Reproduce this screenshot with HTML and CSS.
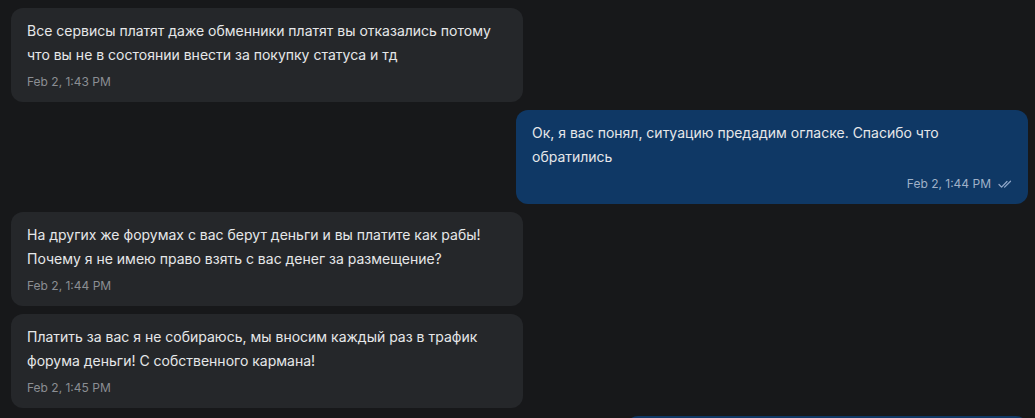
FILE: index.html
```html
<!DOCTYPE html>
<html lang="ru">
<head>
<meta charset="utf-8">
<link rel="stylesheet" href="styles.css">
</head>
<body>
<div class="chat">
  <div class="msg in">
    <div class="text">Все сервисы платят даже обменники платят вы отказались потому что вы не в состоянии внести за покупку статуса и тд</div>
    <div class="meta"><span class="time">Feb 2, 1:43 PM</span></div>
  </div>
  <div class="msg out">
    <div class="text">Ок, я вас понял, ситуацию предадим огласке. Спасибо что обратились</div>
    <div class="meta"><span class="time">Feb 2, 1:44 PM</span>
      <svg class="check" width="14" height="10" viewBox="0 0 14 10" fill="none" stroke="currentColor" stroke-width="1.3" stroke-linecap="round" stroke-linejoin="round"><path d="M1 5.5l2.6 2.6L9 2.5"/><path d="M6.6 8.1L12.5 2.2"/></svg>
    </div>
  </div>
  <div class="msg in">
    <div class="text">На других же форумах с вас берут деньги и вы платите как рабы! Почему я не имею право взять с вас денег за размещение?</div>
    <div class="meta"><span class="time">Feb 2, 1:44 PM</span></div>
  </div>
  <div class="msg in">
    <div class="text">Платить за вас я не собираюсь, мы вносим каждый раз в трафик форума деньги! С собственного кармана!</div>
    <div class="meta"><span class="time">Feb 2, 1:45 PM</span></div>
  </div>
  <div class="msg out short"></div>
</div>
</body>
</html>
```
FILE: styles.css
```css
html, body {
  margin: 0;
  padding: 0;
  background: #17181a;
  height: 100%;
  overflow: hidden;
}
body {
  font-family: Inter, "Noto Sans", sans-serif;
  color: #e4e5e7;
}
.chat {
  display: flex;
  flex-direction: column;
  gap: 8px;
  padding: 8px 7px 0 11px;
}
.msg {
  max-width: 512px;
  box-sizing: border-box;
  padding: 11px 16px 12px 16px;
  border-radius: 12px;
}
.msg.in {
  align-self: flex-start;
  background: #25272a;
  width: 512px;
}
.msg.out {
  align-self: flex-end;
  background: #0f3865;
  width: 512px;
}
.msg.out.short {
  width: 402px;
  height: 94px;
}
.text {
  font-size: 14px;
  line-height: 24px;
  color: #e6e7e9;
}
.meta {
  margin-top: 7px;
  display: flex;
  align-items: center;
  gap: 7px;
  font-size: 12px;
  line-height: 16px;
  color: #8b8e93;
}
.msg.out .meta {
  justify-content: flex-end;
  color: #9fb1c8;
}
.check {
  color: #8ea6c8;
}
```
